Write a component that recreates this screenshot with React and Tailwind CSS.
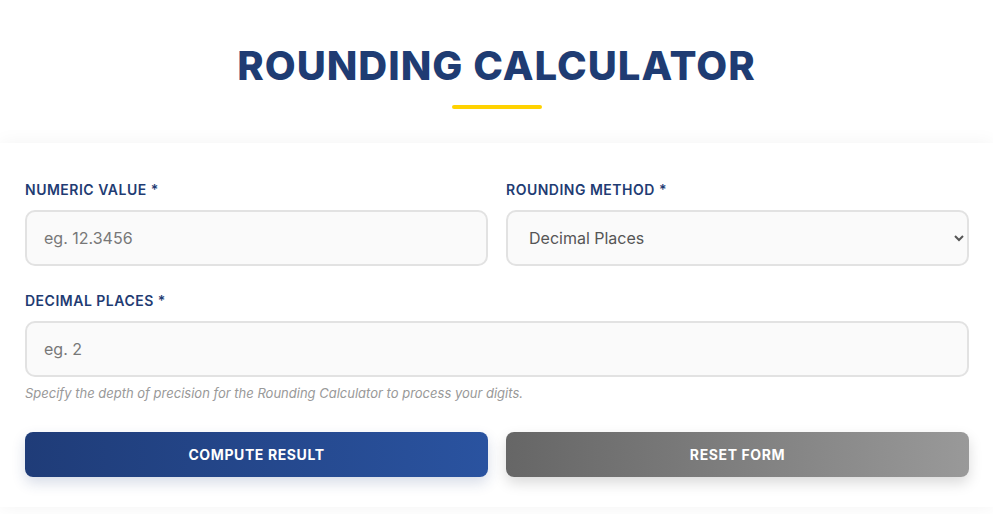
import React from 'react'

// Rounding calculator form

const font = { fontFamily: 'Inter, "Noto Sans", sans-serif' }

function Label({ children }) {
  return (
    <label className="block text-[14px] leading-[20px] font-semibold uppercase tracking-[0.5px] text-[#1f3c73] mb-[10px]">
      {children}
    </label>
  )
}

const inputClass =
  'block w-full h-[56px] rounded-[10px] border-2 border-[#e2e2e2] bg-[#fafafa] px-[17px] text-[16px] text-[#555] placeholder:text-[#777] outline-none'

export default function App() {
  return (
    <div className="min-h-screen bg-white" style={font}>
      <header className="pt-[42px] text-center">
        <h1 className="text-[40px] leading-[48px] font-extrabold tracking-[1px] text-[#1f3c73]">
          ROUNDING CALCULATOR
        </h1>
        <div className="mx-auto mt-[15px] h-[4px] w-[90px] rounded-full bg-[#ffd200]" />
      </header>

      <main className="mt-[34px] bg-white pl-[25px] pr-[24px] pt-[37px] pb-[30px] shadow-[0_0_18px_rgba(0,0,0,0.05)]">
        <div className="grid grid-cols-2 gap-x-[18px]">
          <div>
            <Label>Numeric Value *</Label>
            <input className={inputClass} placeholder="eg. 12.3456" />
          </div>
          <div>
            <Label>Rounding Method *</Label>
            <select className={inputClass + ' pl-[17px] pr-[8px]'} defaultValue="decimal">
              <option value="decimal">Decimal Places</option>
              <option value="significant">Significant Figures</option>
              <option value="nearest">Nearest Integer</option>
            </select>
          </div>
        </div>

        <div className="mt-[25px]">
          <Label>Decimal Places *</Label>
          <input className={inputClass} placeholder="eg. 2" />
          <p className="mt-[8px] text-[13px] leading-[16px] italic text-[#999]">
            Specify the depth of precision for the Rounding Calculator to process your digits.
          </p>
        </div>

        <div className="mt-[31px] grid grid-cols-2 gap-x-[18px]">
          <button className="h-[45px] rounded-[8px] bg-gradient-to-r from-[#1f3c78] to-[#2a53a0] text-[14px] font-bold uppercase tracking-[0.6px] text-white shadow-[0_6px_14px_rgba(31,60,120,0.18)]">
            Compute Result
          </button>
          <button className="h-[45px] rounded-[8px] bg-gradient-to-r from-[#666666] to-[#999999] text-[14px] font-bold uppercase tracking-[0.6px] text-white shadow-[0_6px_14px_rgba(0,0,0,0.15)]">
            Reset Form
          </button>
        </div>
      </main>
    </div>
  )
}
